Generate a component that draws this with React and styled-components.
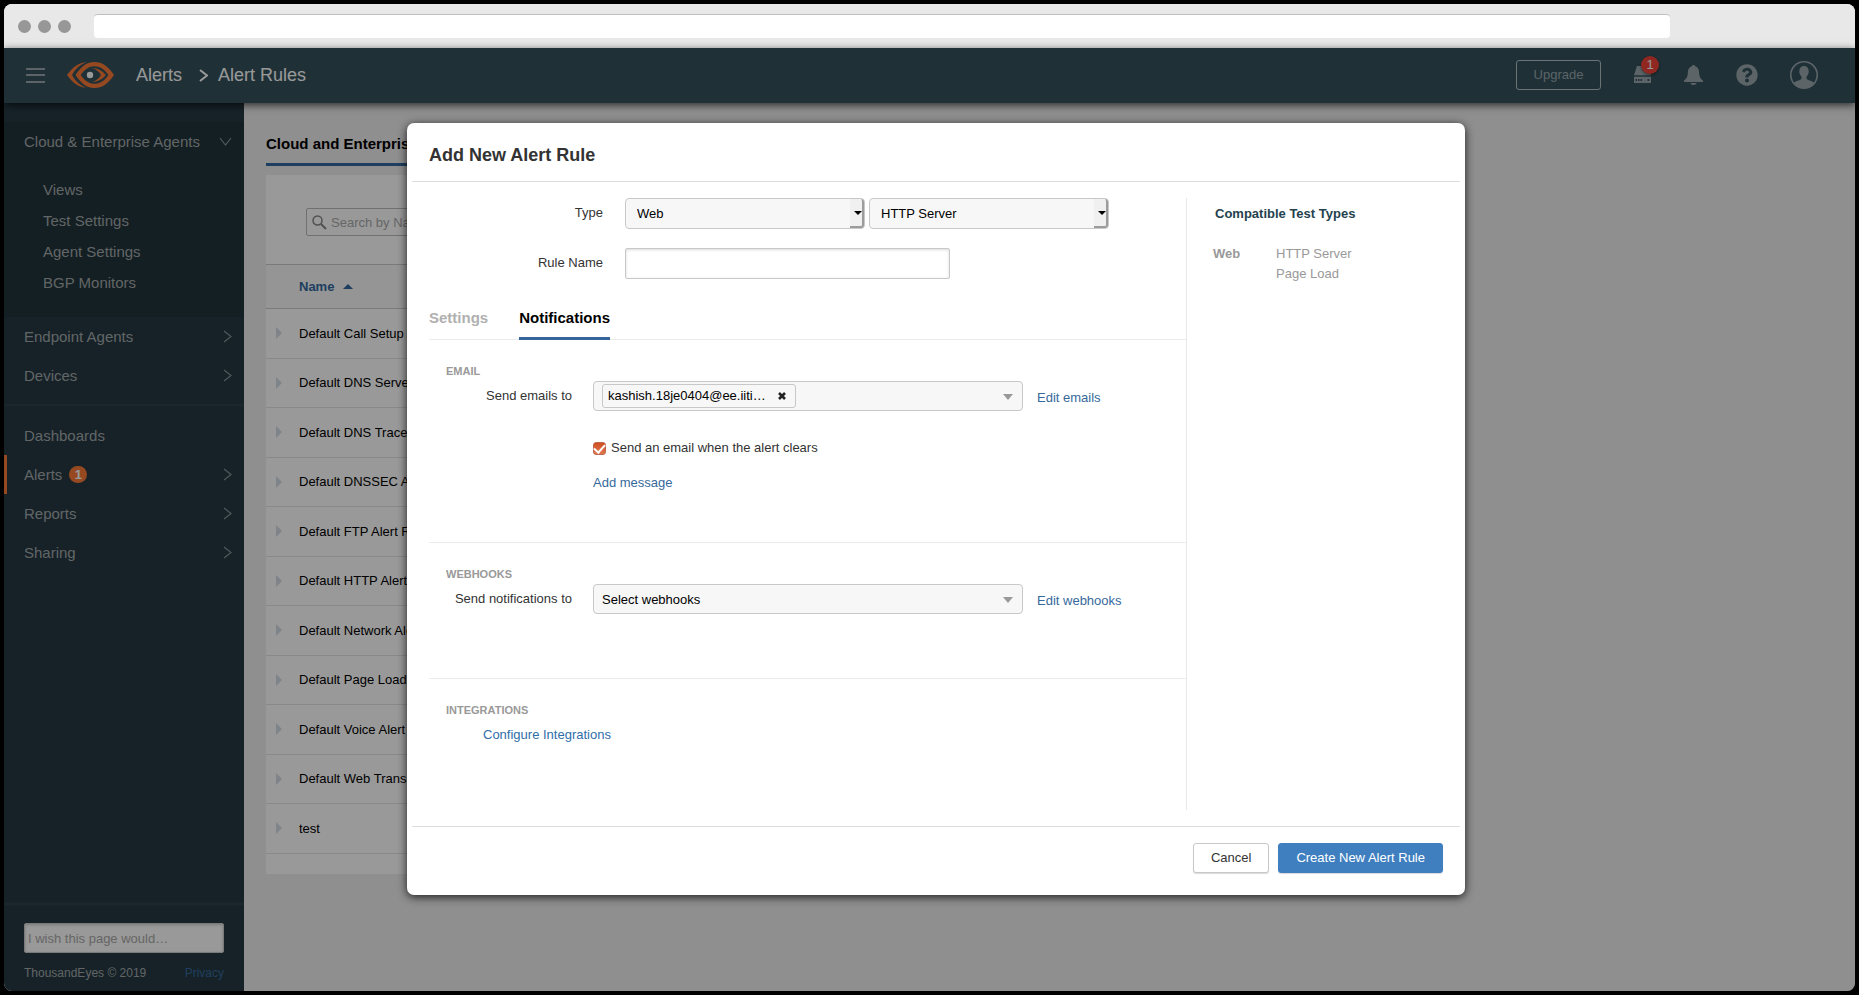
import React, { useState } from "react";
import styled, { createGlobalStyle, css } from "styled-components";
import { FaQuestionCircle } from "react-icons/fa";

const GlobalStyle = createGlobalStyle`
  * {
    box-sizing: border-box;
  }
  body {
    margin: 0;
    background-color: #000000;
    color: #333333;
    font-family: "Liberation Sans", Arial, sans-serif;
    font-size: 13px;
    line-height: 20px;
  }
  button, input, select {
    font-family: inherit;
    font-size: 13px;
  }
  a {
    color: #36699c;
    text-decoration: none;
  }
  ul {
    list-style: none;
    margin: 0;
    padding: 0;
  }
`;

/* browser window */

const Screen = styled.div`
  height: 100vh;
  padding: 4px;
`;

const BrowserWindow = styled.div`
  position: relative;
  display: flex;
  flex-direction: column;
  height: 100%;
  border-radius: 8px;
  overflow: hidden;
  background-color: #eeeeee;
`;

const TitleBar = styled.div`
  display: flex;
  align-items: center;
  flex: none;
  gap: 7px;
  height: 44px;
  padding: 0 185px 0 14px;
  background-color: #e8e8e8;
`;

const Dot = styled.span`
  width: 13px;
  height: 13px;
  border-radius: 50%;
  background-color: #979797;
`;

const AddressInput = styled.input`
  flex: 1;
  height: 24px;
  margin-left: 16px;
  border: 0;
  border-top: 1px solid #c0c0c0;
  border-radius: 4px;
  background-color: #ffffff;
`;

/* header */

const Header = styled.header`
  position: relative;
  z-index: 1;
  display: flex;
  align-items: center;
  flex: none;
  height: 55px;
  padding: 0 37px 2px 22px;
  background-color: #34525c;
  box-shadow: 0 2px 8px rgba(0, 0, 0, 0.7);
`;

const IconButton = styled.button`
  position: relative;
  display: flex;
  padding: 0;
  border: 0;
  background: none;
  color: #99a7ac;
`;

const LogoLink = styled.a`
  display: flex;
  margin: 0 22px;
`;

const Breadcrumb = styled.nav`
  display: flex;
  align-items: center;
  flex: 1;
  font-size: 18px;
  color: #ffffff;
  & a {
    color: inherit;
  }
  & svg {
    margin: 2px 10px 0 17px;
  }
`;

const HeaderTools = styled.div`
  display: flex;
  align-items: center;
`;

const UpgradeButton = styled.button`
  width: 85px;
  height: 30px;
  margin-right: 33px;
  border: 1px solid #b5bfc3;
  border-radius: 3px;
  background: none;
  color: #99a7ac;
`;

const ToolIcons = styled.div`
  display: flex;
  align-items: center;
  gap: 33px;
  & > :last-child {
    margin-left: -1px;
  }
`;

const RedBadge = styled.span`
  position: absolute;
  top: -10px;
  left: 7px;
  width: 18px;
  height: 18px;
  border-radius: 9px;
  background-color: #f04438;
  box-shadow: 0 1px 3px rgba(0, 0, 0, 0.5);
  color: #ffffff;
  line-height: 18px;
  text-align: center;
`;

/* sidebar */

const Body = styled.div`
  display: flex;
  flex: 1;
  min-height: 0;
`;

const Sidebar = styled.aside`
  display: flex;
  flex-direction: column;
  flex: none;
  width: 240px;
  padding-top: 19px;
  background-color: #253a43;
  font-size: 15px;
`;

const OpenGroup = styled.div`
  padding-bottom: 13px;
  background-color: #21343a;
`;

const SubList = styled.ul`
  padding: 19px 0 0 39px;
  & li {
    height: 31px;
  }
`;

const MenuList = styled.ul`
  flex: ${(props) => (props.$grow ? 1 : "none")};
  padding: ${(props) => (props.$grow ? "10px" : "0")} 0 9px;
  border-bottom: 2px solid #2a434b;
`;

const menuText = css`
  color: #a4a9ab;
  line-height: 20px;
`;

const MenuItem = styled.a`
  ${menuText}
  display: flex;
  align-items: center;
  height: 39px;
  padding: 0 12px 0 17px;
  border-left: 3px solid ${(props) => (props.$active ? "#fa7b38" : "transparent")};
  & svg {
    margin-left: auto;
  }
`;

const SubItem = styled.a`
  ${menuText}
`;

const CountBadge = styled.span`
  width: 18px;
  height: 17px;
  margin-left: 7px;
  border-radius: 9px;
  background-color: #fa7b38;
  color: #ffffff;
  font-size: 13px;
  font-weight: bold;
  line-height: 17px;
  text-align: center;
`;

const SidebarFooter = styled.div`
  padding: 18px 20px 8px;
  color: #a4a9ab;
  font-size: 12px;
`;

const WishInput = styled.input`
  display: block;
  width: 100%;
  height: 30px;
  padding: 0 3px;
  border: 1px solid #cccccc;
  border-radius: 2px;
  box-shadow: inset 0 1px 3px rgba(0, 0, 0, 0.2);
  &::placeholder {
    color: #aaaaaa;
  }
`;

const Legal = styled.div`
  display: flex;
  justify-content: space-between;
  margin-top: 10px;
`;

/* rules list behind the dialog */

const Main = styled.main`
  flex: 1;
  min-width: 0;
  padding: 28px 22px 0;
`;

const PageTab = styled.button`
  display: block;
  height: 35px;
  margin-bottom: 9px;
  padding: 0 0 7px;
  border: 0;
  border-bottom: 3px solid #3369a0;
  background: none;
  color: #000000;
  font-size: 15px;
  font-weight: bold;
`;

const Panel = styled.section`
  max-width: 1160px;
  padding-bottom: 20px;
  background-color: #ffffff;
`;

const SearchBar = styled.div`
  padding: 33px 40px 28px;
`;

const SearchBox = styled.label`
  display: flex;
  align-items: center;
  gap: 2px;
  width: 280px;
  height: 28px;
  padding-left: 5px;
  border: 1px solid #bbbbbb;
  border-radius: 2px;
  & input {
    flex: 1;
    border: 0;
    background: none;
  }
  & input::placeholder {
    color: #aaaaaa;
  }
`;

const RuleTable = styled.table`
  width: 100%;
  border-collapse: separate;
  border-spacing: 0;
  color: #000000;
  text-align: left;
  & th {
    height: 45px;
    padding: 1px 0 0 33px;
    border-top: 1px solid #cccccc;
    border-bottom: 1px solid #cccccc;
    background-color: #f9f9f9;
    color: #3369a0;
  }
  & td {
    height: 49px;
    padding: 0 0 0 10px;
    border-bottom: 1px solid #e4e4e4;
  }
  & tbody tr:nth-child(odd) td {
    height: 50px;
  }
`;

const SortArrow = styled.span`
  display: inline-block;
  margin: 0 0 2px 9px;
  border: 5px solid transparent;
  border-top: 0;
  border-bottom-color: #3369a0;
`;

const RowArrow = styled.span`
  display: inline-block;
  margin: 0 17px 2px 0;
  border: 6px solid transparent;
  border-right: 0;
  border-left-color: #d3dde4;
  vertical-align: middle;
`;

/* dialog */

const Overlay = styled.div`
  position: absolute;
  inset: 44px 0 0;
  z-index: 2;
  display: flex;
  justify-content: center;
  align-items: flex-start;
  padding: 75px 0 0 13px;
  background-color: rgba(0, 0, 0, 0.4);
`;

const Dialog = styled.div`
  width: 1058px;
  max-width: 100%;
  padding: 0 5px;
  border-radius: 7px;
  background-color: #ffffff;
  box-shadow: 0 2px 10px rgba(0, 0, 0, 0.8);
`;

const DialogTitle = styled.h2`
  margin: 0;
  padding: 22px 17px 15px;
  border-bottom: 1px solid #dddddd;
  font-size: 18px;
  line-height: 21px;
`;

const DialogBody = styled.div`
  display: flex;
  padding: 16px 17px;
`;

const RuleForm = styled.form`
  flex: 1;
  min-height: 612px;
  border-right: 1px solid #e8e8e8;
`;

const FieldRow = styled.div`
  display: flex;
  gap: 4px;
  margin-bottom: 19px;
`;

const FieldLabel = styled.label`
  width: ${(props) => (props.$narrow ? "143px" : "174px")};
  margin-right: ${(props) => (props.$narrow ? "21px" : "18px")};
  padding-top: 5px;
  text-align: right;
`;

const SelectWrap = styled.span`
  position: relative;
  width: 240px;
  height: 31px;
  &::before {
    content: "";
    position: absolute;
    top: 1px;
    right: 1px;
    bottom: 1px;
    width: 12px;
    border-right: 2px solid #9c9c9c;
    border-bottom: 2px solid #9c9c9c;
    border-radius: 0 3px 3px 0;
    background-color: #f0f0f0;
    pointer-events: none;
  }
  &::after {
    content: "";
    position: absolute;
    top: 13px;
    right: 3px;
    border: 4px solid transparent;
    border-bottom: 0;
    border-top-color: #000000;
    pointer-events: none;
  }
`;

const Select = styled.select`
  width: 100%;
  height: 100%;
  padding: 0 11px;
  border: 1px solid #c8c8c8;
  border-radius: 4px;
  background-color: #f7f7f7;
  color: #000000;
  appearance: none;
`;

const NameInput = styled.input`
  width: 325px;
  height: 31px;
  padding: 0 8px;
  border: 1px solid #c8c8c8;
  border-radius: 2px;
  box-shadow: inset 0 1px 3px rgba(0, 0, 0, 0.15);
`;

const TabList = styled.div`
  display: flex;
  gap: 31px;
  border-bottom: 1px solid #ebebeb;
`;

const Tab = styled.button`
  height: 42px;
  margin-bottom: -1px;
  padding: 0;
  border: 0;
  border-bottom: 3px solid ${(props) => (props.$active ? "#36659c" : "transparent")};
  background: none;
  color: ${(props) => (props.$active ? "#000000" : "#b0b0b0")};
  font-size: 15px;
  font-weight: bold;
`;

const Section = styled.section`
  min-height: ${(props) => props.$height};
  padding-top: 21px;
  & + & {
    border-top: 1px solid #ebebeb;
  }
`;

const SectionTitle = styled.h3`
  margin: 0 0 0 17px;
  color: #999999;
  font-size: 11px;
  line-height: 20px;
`;

const PickerRow = styled.div`
  display: flex;
  align-items: flex-start;
`;

const Picker = styled.div`
  display: flex;
  align-items: center;
  justify-content: space-between;
  width: 430px;
  height: 30px;
  padding: 0 20px 0 8px;
  border: 1px solid #c8c8c8;
  border-radius: 4px;
  background-color: #f7f7f7;
  color: #000000;
`;

const PickerButton = styled.button`
  display: flex;
  align-items: center;
  justify-content: flex-end;
  flex: 1;
  height: 100%;
  padding: 0;
  border: 0;
  background: none;
  color: inherit;
  & span {
    margin-right: auto;
  }
  &::after {
    content: "";
    margin: 2px -11px 0 0;
    border: 5px solid transparent;
    border-top: 6px solid #999999;
    border-bottom: 0;
  }
`;

const Chip = styled.span`
  display: flex;
  align-items: center;
  justify-content: space-between;
  width: 194px;
  height: 24px;
  padding: 0 9px 0 5px;
  border: 1px solid #c8c8c8;
  border-radius: 3px;
`;

const ChipRemove = styled.button`
  display: flex;
  padding: 0;
  border: 0;
  background: none;
`;

const EditLink = styled.a`
  margin: 7px 0 0 14px;
`;

const Extras = styled.div`
  display: flex;
  flex-direction: column;
  gap: 15px;
  padding: 27px 0 0 164px;
`;

const CheckLabel = styled.label`
  display: flex;
  align-items: center;
  gap: 5px;
`;

const Checkbox = styled.input`
  display: flex;
  align-items: center;
  justify-content: center;
  width: 13px;
  height: 13px;
  margin: 0;
  border: 1px solid #c0664a;
  border-radius: 3px;
  background-color: #ffffff;
  appearance: none;
  &:checked {
    background-image: linear-gradient(#cf4f22, #e0794f);
  }
  &:checked::after {
    content: "";
    width: 5px;
    height: 9px;
    margin-bottom: 2px;
    border: solid #ffffff;
    border-width: 0 2px 2px 0;
    transform: rotate(42deg);
  }
`;

const ConfigureLink = styled.a`
  display: inline-block;
  margin: 5px 0 0 54px;
  color: #2f6ea8;
`;

const TestTypes = styled.aside`
  width: 256px;
  padding: 6px 0 0 26px;
`;

const TestTypesTitle = styled.h3`
  margin: 0 0 20px 2px;
  color: #24424d;
  font-size: 13px;
  line-height: 20px;
`;

const TestTypeList = styled.dl`
  display: grid;
  grid-template-columns: 63px 1fr;
  margin: 0;
  color: #999999;
  & dt {
    font-weight: bold;
  }
  & dd {
    grid-column: 2;
    margin: 0;
  }
`;

const DialogFooter = styled.div`
  display: flex;
  justify-content: flex-end;
  gap: 9px;
  padding: 16px 17px 22px;
  border-top: 1px solid #dddddd;
`;

const DialogButton = styled.button`
  height: 30px;
  padding: 0 17px 1px;
  border: 1px solid ${(props) => (props.$primary ? "#3f7fbf" : "#c8c8c8")};
  border-radius: 3px;
  background-color: ${(props) => (props.$primary ? "#3f7fbf" : "#ffffff")};
  box-shadow: 0 1px 1px rgba(0, 0, 0, 0.15);
  color: ${(props) => (props.$primary ? "#ffffff" : "#333333")};
`;

/* icons */

const MenuIcon = () => (
  <svg width="19" height="16" viewBox="0 0 19 16" stroke="currentColor" strokeWidth="2">
    <path d="M0 2h19M0 8h19M0 15h19" />
  </svg>
);

const Logo = () => (
  <svg width="47" height="26" viewBox="0 0 47 26" fill="none">
    <path
      d="M27.500 0C20 0 14 4.500 8.500 13c5.500 8.500 11.500 13 19 13S41.500 21.500 47 13C41.500 4.500 35 0 27.500 0zM27.500 4.200c5.400 0 10 2.900 14 8.800-4 5.900-8.600 8.800-14 8.800s-9.800-2.900-13.800-8.800c4-5.900 8.400-8.800 13.800-8.800z"
      fill="#fa7b38"
      fillRule="evenodd"
    />
    <path
      d="M19.500 0C12 .8 5.500 5 0 13c5.500 8 12 12.200 19.500 13-6-2.500-11-6.500-14.500-13 3.500-6.500 8.500-10.500 14.500-13z"
      fill="#fa7b38"
    />
    <path
      d="M25 6c6 .3 10.300 2.600 13.800 7-3.500 4.400-7.800 6.700-13.800 7 4-1.200 7-3.500 9-7-2-3.500-5-5.800-9-7z"
      fill="#fa7b38"
    />
    <circle cx="23" cy="13" r="3.200" fill="#ffffff" />
  </svg>
);

const Chevron = ({ down, bold }) => (
  <svg
    width={down ? 13 : 9}
    height={down ? 9 : 13}
    viewBox={down ? "0 0 13 9" : "0 0 9 13"}
    fill="none"
    stroke={bold ? "#ffffff" : "#87939a"}
    strokeWidth={bold ? 2 : 1.2}
  >
    <path d={down ? "M1 1l5.500 7L12 1" : "M1 1l7 5.500L1 12"} />
  </svg>
);

const ServerIcon = () => (
  <svg width="17" height="17" viewBox="0 0 17 17" fill="currentColor">
    <path d="M3 0h11l3 9.200H0z" />
    <path
      d="M0 10.700h17V17H0zM1.500 13v2H3v-2zM4 13v2h1.500v-2zM6.500 13v2H8v-2zM13.500 13v2h1.800v-2z"
      fillRule="evenodd"
    />
  </svg>
);

const BellIcon = () => (
  <svg width="19" height="20" viewBox="0 0 19 20" fill="currentColor">
    <path d="M9.500 0c-1 0-1.400.600-1.500 1.200C5.200 2 4 4.200 3.900 7c-.1 4.200-.9 6.300-3.900 8.600V17h19v-1.400c-3-2.300-3.800-4.400-3.900-8.600-.1-2.800-1.300-5-4.100-5.800C10.900.600 10.500 0 9.500 0z" />
    <path d="M6.500 18h6c-.3 1.200-1.200 2-3 2s-2.700-.8-3-2z" />
  </svg>
);

const UserIcon = () => (
  <svg width="28" height="28" viewBox="0 0 28 28">
    <circle cx="14" cy="14" r="13.200" fill="none" stroke="currentColor" strokeWidth="1.600" />
    <path
      d="M14 5c-2.900 0-4.700 2-4.700 5 0 2.400.8 4.400 2.200 5.700v2c-1 1.500-5.300 2-8 4.300A13.200 13.200 0 0 0 24.500 22c-2.700-2.300-7-2.800-8-4.300v-2c1.400-1.300 2.200-3.300 2.200-5.700 0-3-1.800-5-4.700-5z"
      fill="currentColor"
    />
  </svg>
);

const SearchIcon = () => (
  <svg width="15" height="15" viewBox="0 0 15 15" fill="none" stroke="#888888">
    <circle cx="5.500" cy="5.500" r="4.500" strokeWidth="1.500" />
    <path d="M9 9l5 5" strokeWidth="2" />
  </svg>
);

const RemoveIcon = () => (
  <svg width="8" height="8" viewBox="0 0 8 8" stroke="#222222" strokeWidth="2.600">
    <path d="M1 1l6 6M7 1L1 7" />
  </svg>
);

const views = ["Views", "Test Settings", "Agent Settings", "BGP Monitors"];

const rules = [
  "Default Call Setup Alert Rule",
  "Default DNS Server Alert Rule",
  "Default DNS Trace Alert Rule",
  "Default DNSSEC Alert Rule",
  "Default FTP Alert Rule",
  "Default HTTP Alert Rule",
  "Default Network Alert Rule",
  "Default Page Load Alert Rule",
  "Default Voice Alert Rule",
  "Default Web Transaction Alert Rule",
  "test",
];

function AppHeader() {
  return (
    <Header>
      <IconButton aria-label="Menu">
        <MenuIcon />
      </IconButton>
      <LogoLink href="#" aria-label="Home">
        <Logo />
      </LogoLink>
      <Breadcrumb>
        <a href="#">Alerts</a>
        <Chevron bold />
        <span>Alert Rules</span>
      </Breadcrumb>
      <HeaderTools>
        <UpgradeButton>Upgrade</UpgradeButton>
        <ToolIcons>
          <IconButton aria-label="Agents">
            <ServerIcon />
            <RedBadge>1</RedBadge>
          </IconButton>
          <IconButton aria-label="Notifications">
            <BellIcon />
          </IconButton>
          <IconButton aria-label="Help">
            <FaQuestionCircle size={22} />
          </IconButton>
          <IconButton aria-label="Account">
            <UserIcon />
          </IconButton>
        </ToolIcons>
      </HeaderTools>
    </Header>
  );
}

function SideMenu() {
  return (
    <Sidebar>
      <OpenGroup>
        <MenuItem href="#">
          Cloud &amp; Enterprise Agents
          <Chevron down />
        </MenuItem>
        <SubList>
          {views.map((name) => (
            <li key={name}>
              <SubItem href="#">{name}</SubItem>
            </li>
          ))}
        </SubList>
      </OpenGroup>
      <MenuList>
        {["Endpoint Agents", "Devices"].map((name) => (
          <li key={name}>
            <MenuItem href="#">
              {name}
              <Chevron />
            </MenuItem>
          </li>
        ))}
      </MenuList>
      <MenuList $grow>
        <li>
          <MenuItem href="#">Dashboards</MenuItem>
        </li>
        <li>
          <MenuItem href="#" $active>
            Alerts
            <CountBadge>1</CountBadge>
            <Chevron />
          </MenuItem>
        </li>
        {["Reports", "Sharing"].map((name) => (
          <li key={name}>
            <MenuItem href="#">
              {name}
              <Chevron />
            </MenuItem>
          </li>
        ))}
      </MenuList>
      <SidebarFooter>
        <WishInput aria-label="Feedback" placeholder="I wish this page would…" />
        <Legal>
          <span>ThousandEyes © 2019</span>
          <a href="#">Privacy</a>
        </Legal>
      </SidebarFooter>
    </Sidebar>
  );
}

function RulesPage() {
  return (
    <Main>
      <PageTab>Cloud and Enterprise Agents</PageTab>
      <Panel>
        <SearchBar>
          <SearchBox>
            <SearchIcon />
            <input aria-label="Search" placeholder="Search by Name" />
          </SearchBox>
        </SearchBar>
        <RuleTable>
          <thead>
            <tr>
              <th>
                Name
                <SortArrow />
              </th>
            </tr>
          </thead>
          <tbody>
            {rules.map((name) => (
              <tr key={name}>
                <td>
                  <RowArrow />
                  {name}
                </td>
              </tr>
            ))}
          </tbody>
        </RuleTable>
      </Panel>
    </Main>
  );
}

function AlertRuleDialog() {
  const [tab, setTab] = useState("Notifications");
  const [onClear, setOnClear] = useState(true);

  return (
    <Dialog role="dialog" aria-labelledby="dialog-title">
      <DialogTitle id="dialog-title">Add New Alert Rule</DialogTitle>
      <DialogBody>
        <RuleForm id="rule-form">
          <FieldRow>
            <FieldLabel htmlFor="type">Type</FieldLabel>
            <SelectWrap>
              <Select id="type">
                <option>Web</option>
              </Select>
            </SelectWrap>
            <SelectWrap>
              <Select aria-label="Test type">
                <option>HTTP Server</option>
                <option>Page Load</option>
              </Select>
            </SelectWrap>
          </FieldRow>
          <FieldRow>
            <FieldLabel htmlFor="rule-name">Rule Name</FieldLabel>
            <NameInput id="rule-name" />
          </FieldRow>
          <TabList role="tablist">
            {["Settings", "Notifications"].map((name) => (
              <Tab
                key={name}
                type="button"
                role="tab"
                aria-selected={tab === name}
                $active={tab === name}
                onClick={() => setTab(name)}
              >
                {name}
              </Tab>
            ))}
          </TabList>
          <Section $height="202px">
            <SectionTitle>EMAIL</SectionTitle>
            <PickerRow>
              <FieldLabel $narrow htmlFor="emails">
                Send emails to
              </FieldLabel>
              <Picker>
                <Chip>
                  kashish.18je0404@ee.iiti…
                  <ChipRemove type="button" aria-label="Remove">
                    <RemoveIcon />
                  </ChipRemove>
                </Chip>
                <PickerButton type="button" id="emails" />
              </Picker>
              <EditLink href="#">Edit emails</EditLink>
            </PickerRow>
            <Extras>
              <CheckLabel>
                <Checkbox
                  type="checkbox"
                  checked={onClear}
                  onChange={(e) => setOnClear(e.target.checked)}
                />
                Send an email when the alert clears
              </CheckLabel>
              <a href="#">Add message</a>
            </Extras>
          </Section>
          <Section $height="136px">
            <SectionTitle>WEBHOOKS</SectionTitle>
            <PickerRow>
              <FieldLabel $narrow htmlFor="webhooks">
                Send notifications to
              </FieldLabel>
              <Picker>
                <PickerButton type="button" id="webhooks">
                  <span>Select webhooks</span>
                </PickerButton>
              </Picker>
              <EditLink href="#">Edit webhooks</EditLink>
            </PickerRow>
          </Section>
          <Section $height="130px">
            <SectionTitle>INTEGRATIONS</SectionTitle>
            <ConfigureLink href="#">Configure Integrations</ConfigureLink>
          </Section>
        </RuleForm>
        <TestTypes>
          <TestTypesTitle>Compatible Test Types</TestTypesTitle>
          <TestTypeList>
            <dt>Web</dt>
            <dd>HTTP Server</dd>
            <dd>Page Load</dd>
          </TestTypeList>
        </TestTypes>
      </DialogBody>
      <DialogFooter>
        <DialogButton type="button">Cancel</DialogButton>
        <DialogButton $primary type="submit" form="rule-form">
          Create New Alert Rule
        </DialogButton>
      </DialogFooter>
    </Dialog>
  );
}

export default function App() {
  return (
    <Screen>
      <GlobalStyle />
      <BrowserWindow>
        <TitleBar>
          <Dot />
          <Dot />
          <Dot />
          <AddressInput aria-label="Address" />
        </TitleBar>
        <AppHeader />
        <Body>
          <SideMenu />
          <RulesPage />
        </Body>
        <Overlay>
          <AlertRuleDialog />
        </Overlay>
      </BrowserWindow>
    </Screen>
  );
}
